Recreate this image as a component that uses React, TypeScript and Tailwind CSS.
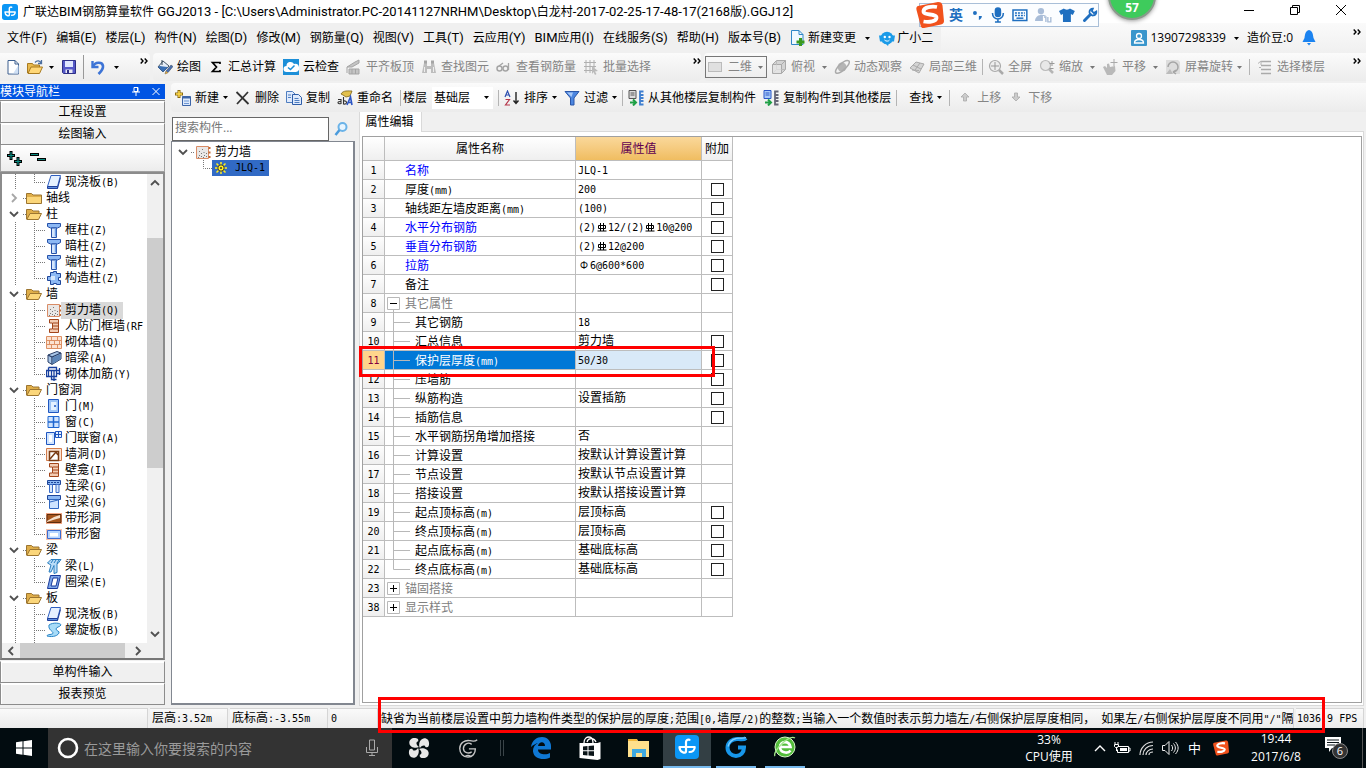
import React, { Fragment, type ReactNode } from "react";

/* ---------- text helpers ---------- */

const RebarIII = () => (
  <svg role="img" aria-label="HRB400" viewBox="0 0 12 10" className="inline-block h-[10px] w-3 align-[-1px]">
    <path d="M2.5 3.5h7v3h-7zM4.5 1v8M7.5 1v8M1.5 9h9" fill="none" stroke="#000" strokeWidth="1" />
  </svg>
);

/* Half-width Latin runs beside full-width Han characters. "#" stands for the grade III bar symbol. */
function Grid({ t }: { t: string }) {
  const parts = t.match(/#|Φ|[\x20-\x7e]+?(?=#|Φ|[^\x20-\x7e]|$)|[^\x20-\x7eΦ]+/g) ?? [];
  return (
    <>
      {parts.map((p, i) => {
        if (p === "#") return <RebarIII key={i} />;
        if (p === "Φ")
          return (
            <span key={i} className="inline-block w-3 text-center text-[10px]">
              Φ
            </span>
          );
        if (/^[\x20-\x7e]/.test(p))
          return (
            <span key={i} className="font-['DejaVu_Sans_Mono',monospace] text-[10px]">
              {p}
            </span>
          );
        return <Fragment key={i}>{p}</Fragment>;
      })}
    </>
  );
}

/* Window captions and menus: Latin runs one pixel larger than the Han text. */
function Caption({ t }: { t: string }) {
  const parts = t.match(/[\x20-\x7e]+|[^\x20-\x7e]+/g) ?? [];
  return (
    <>
      {parts.map((p, i) =>
        /^[\x20-\x7e]/.test(p) ? (
          <span key={i} className="font-[Roboto,sans-serif] text-[13px]">{p}</span>
        ) : (
          <Fragment key={i}>{p}</Fragment>
        ),
      )}
    </>
  );
}

/* ---------- small glyphs ---------- */

const Arrow = ({ dim }: { dim?: boolean }) => (
  <svg viewBox="0 0 5 3" className={dim ? "h-[3px] w-[5px] shrink-0 text-[#777]" : "h-[3px] w-[5px] shrink-0 text-black"}>
    <path d="M0 0h5L2.5 3z" fill="currentColor" />
  </svg>
);
const Sep = ({ tight }: { tight?: boolean }) => <span className={tight ? "-mx-[2px] h-4 w-px shrink-0 bg-[#b4b4b4]" : "h-4 w-px shrink-0 bg-[#b4b4b4]"} />;
const More = () => (
  <button aria-label="更多" className="mb-3 shrink-0">
    <svg viewBox="0 0 8 6" className="h-[6px] w-2">
      <path d="M.7.5 3 3 .7 5.5M4.7.5 7 3 4.7 5.5" fill="none" stroke="#000" strokeWidth="1.4" />
    </svg>
  </button>
);
const Ico = ({ children }: { children: ReactNode }) => (
  <svg viewBox="0 0 16 16" className="h-4 w-4 shrink-0" fill="none">
    {children}
  </svg>
);

const AppLogo = ({ big }: { big?: boolean }) => (
  <svg viewBox="0 0 24 24" className={big ? "h-6 w-6" : "h-4 w-4"} fill="none">
    <rect width="24" height="24" rx="4" fill="#0b96f5" />
    <path d="M14.500 4.800c-2.200-.6-3.500.5-3.500 2.500v9.200c0 2.500-6.500 1-6.500-4.500h15.200c0 3-2.200 5-5.200 5" stroke="#fff" strokeWidth="2.200" strokeLinecap="round" strokeLinejoin="round" />
  </svg>
);

const icons: Record<string, ReactNode> = {
  newDoc: (
    <Ico>
      <path d="M3 1.500h7l3.500 3.500v10H3z" fill="#fff" stroke="#3c5f8f" />
      <path d="M3.500 14.500h10V6l-5 8z" fill="#cfe0f5" />
      <path d="M10 1.500V5h3.500" stroke="#3c5f8f" />
    </Ico>
  ),
  open: (
    <Ico>
      <path d="M.5 14V4.500h5l1 1.500h6v2" fill="#e8b94d" stroke="#a87a20" />
      <path d="M1 14.500 4 8h11.500l-3 6.500z" fill="#ffd777" stroke="#a87a20" />
      <path d="M8 3.500c2-2.500 5-2 6 .5m.5-3v3.500H11" stroke="#4c6f9f" strokeWidth="1.300" />
    </Ico>
  ),
  save: (
    <Ico>
      <path d="M1.500 1.500h13v13h-12l-1-1z" fill="#5458c8" stroke="#2d2f86" />
      <path d="M4 2h8v6H4z" fill="#dfe6ff" />
      <path d="M4.500 10.500h7V14h-7z" fill="#e8e8f4" />
      <path d="M6 11h2v3H6z" fill="#2d2f86" />
    </Ico>
  ),
  undo: (
    <Ico>
      <path d="M2.500 2v6h6" stroke="#3d74d6" strokeWidth="2.400" />
      <path d="M3 7.500C5 2.500 12.500 2.500 13 7c.3 3.500-2 5.500-4.500 8" stroke="#3d74d6" strokeWidth="2.600" />
    </Ico>
  ),
  draw: (
    <Ico>
      <path d="m6 2 6 5-6 6-5-5z" fill="#e6eef8" stroke="#456" />
      <path d="M5 1v5" stroke="#345" />
      <path d="M1 8c2-2 4 0 10 0l-5 5z" fill="#3a6fb5" />
      <path d="m8 15 1-3 5-6 2 1.500-5 6z" fill="#4b6fb0" stroke="#345" strokeWidth=".5" />
      <path d="m8 15 1-3 2 2z" fill="#e3a93a" />
    </Ico>
  ),
  sigma: (
    <Ico>
      <path d="M12 5V3.500H4.500L8.500 8l-4 4.500H12V11" stroke="#000" strokeWidth="1.700" />
    </Ico>
  ),
  cloud: (
    <Ico>
      <rect width="16" height="16" fill="#1c8fd8" />
      <path d="M3.500 13a2.500 2.500 0 0 1 0-6 4 4 0 0 1 7.500-2 4 4 0 0 1 2 8z" fill="#fff" />
      <path d="m5 8.500 2.500 2 4-4" stroke="#1c8fd8" strokeWidth="1.500" />
    </Ico>
  ),
  align: (
    <Ico>
      <path d="m1 8 8-5 4-2v3L6 8zM3 10h10v5H3z" fill="#c4c4c4" stroke="#a5a5a5" />
      <path d="M1 8v6M6 10v5M9.500 10v5" stroke="#a5a5a5" />
    </Ico>
  ),
  find: (
    <Ico>
      <path d="M3 4h3v3h4V4h3l2 10h-5v-4H6v4H1z" fill="#bdbdbd" />
      <path d="M3 1.500h3v3H3zM10 1.500h3v3h-3z" fill="#a5a5a5" />
      <path d="M3.500 8v5M12.500 8v5" stroke="#eee" />
    </Ico>
  ),
  glasses: (
    <Ico>
      <circle cx="3.500" cy="9.500" r="2.500" stroke="#a5a5a5" strokeWidth="1.500" />
      <circle cx="9.500" cy="9.500" r="2.500" stroke="#a5a5a5" strokeWidth="1.500" />
      <path d="m3 7 4-3M12.500 11V4" stroke="#a5a5a5" strokeWidth="1.300" />
    </Ico>
  ),
  batch: (
    <Ico>
      <path d="M3 1v13M7 1v13M11 1v8M1 3.500h12M1 7.500h12M1 11.500h8" stroke="#b0b0b0" />
      <path d="m9 7 6 5-3 .5L13.500 15 12 16l-1.500-3L9 15z" fill="#bbb" />
    </Ico>
  ),
  cube: (
    <Ico>
      <path d="m1.500 5.500 4-4h9v9l-4 4h-9z" fill="#d4d4d4" stroke="#aaa" />
      <path d="M1.500 5.500h9v9M10.500 5.500l4-4" stroke="#aaa" />
      <path d="M5.500 1.500v9h9M5.500 10.500l-4 4" stroke="#bbb" />
      <path d="M2 6h8v8H2z" fill="#ececec" fillOpacity=".6" />
    </Ico>
  ),
  orbit: (
    <Ico>
      <circle cx="8" cy="8" r="4.500" fill="#b5b5b5" />
      <path d="M2 14C-1 11 11-1 15 2c2 3-9 14-13 12z" stroke="#aaa" strokeWidth="1.500" />
    </Ico>
  ),
  local3d: (
    <Ico>
      <path d="m1 9 6-6 8 2-5 9z" fill="#d4d4d4" stroke="#aaa" />
      <path d="m4 6 8 4M6 11l5-7M3 11l7 .5" stroke="#aaa" />
    </Ico>
  ),
  full: (
    <Ico>
      <circle cx="7" cy="7" r="5.500" fill="#eee" stroke="#aaa" strokeWidth="1.200" />
      <path d="M7 3v8M3 7h8" stroke="#999" />
      <path d="m11 11 4 4" stroke="#aaa" strokeWidth="2.500" />
    </Ico>
  ),
  zoom: (
    <Ico>
      <circle cx="6.500" cy="6.500" r="5" fill="#e8e8e8" stroke="#bbb" strokeWidth="1.200" />
      <path d="m10 10 4 4" stroke="#b5b5b5" strokeWidth="2.500" />
      <path d="M13 2v5M10.500 4.500h5M10.500 9.500h4" stroke="#999" />
    </Ico>
  ),
  pan: (
    <Ico>
      <path d="M1 8 3 7l2 2V5l2-.5L8 8l5-1 .5 5-3.500 4H5z" fill="#b9b9b9" />
      <path d="M12 0v7M8.500 3.500h7" stroke="#aaa" />
    </Ico>
  ),
  rotate: (
    <Ico>
      <path d="M1 1h12l2 2v12H1z" fill="#ddd" />
      <path d="M3 8a5 5 0 1 1 5 5M8 13l3-2m-3 2 3 2" stroke="#a5a5a5" strokeWidth="1.500" />
      <path d="m1 15 4-5 3 5z" fill="#bbb" />
    </Ico>
  ),
  floor: (
    <Ico>
      <path d="M4 2.500h10M4 6.500h10M4 10.500h10M4 14.500h10" stroke="#aaa" strokeWidth="1.500" />
      <path d="M1 4.500 4 2v4M2 8.500h2" stroke="#b5b5b5" />
    </Ico>
  ),
  create: (
    <Ico>
      <path d="M4 0v8M0 4h8" stroke="#8a6a10" strokeWidth="3" />
      <path d="M4 1v6M1 4h6" stroke="#ffd94a" strokeWidth="1.500" />
      <path d="M7.500 6.500h8v9h-8z" fill="#dce9fb" stroke="#3c64a8" />
      <path d="M7.500 7.500h8" stroke="#3c64a8" strokeWidth="2" />
      <path d="M9 11h5M9 13.500h5" stroke="#6f97d4" />
    </Ico>
  ),
  del: (
    <Ico>
      <path d="m1.500 2 12 12M13 2 2 14" stroke="#333" strokeWidth="1.800" />
    </Ico>
  ),
  copy: (
    <Ico>
      <path d="M.5 1.500h6l3 3v8h-9z" fill="#dfeafc" stroke="#4f7ec0" />
      <path d="M6.500 4.500h6l3 3v7h-9z" fill="#dfeafc" stroke="#2e5da8" />
      <path d="M2 5h3M2 7.500h3M8.500 8.500h4M8.500 10.500h5M8.500 12.500h5" stroke="#4f7ec0" />
    </Ico>
  ),
  rename: (
    <Ico>
      <path d="M4 4c2-4 8-3 11-3l-2 5-4 1-3-2z" fill="#e2c04d" stroke="#7b6216" strokeWidth=".8" />
      <path d="M1 9.500h3V14M4 11.500c-4-.5-4 3 0 2M6.500 7v7c4 1 4-4 0-3" stroke="#333" strokeWidth="1.100" />
      <path d="m10 15 3.500-8L15 15M11 12.500h4" stroke="#2c55c4" strokeWidth="1.600" />
    </Ico>
  ),
  sort: (
    <Ico>
      <path d="M1 7 3.500 1 6 7M2 5h3" stroke="#2c4fb0" strokeWidth="1.200" />
      <path d="M1.500 9.500h4L1.500 15h4.500" stroke="#b5364a" strokeWidth="1.200" />
      <path d="M12 2v11M9.500 10.500 12 13.500l2.500-3" stroke="#222" strokeWidth="1.400" />
    </Ico>
  ),
  filter: (
    <Ico>
      <path d="M1 1.500h14L10 8v7H6.500V8z" fill="#4c86e0" stroke="#2a56a8" />
      <path d="M3 2.500h6L7.500 7z" fill="#a9caf8" />
    </Ico>
  ),
  fromFloor: (
    <Ico>
      <path d="M1 .5h7v8H1z" fill="#ddd" stroke="#555" />
      <path d="M2.500 3h4M2.500 5h4" stroke="#555" />
      <path d="M15.500 1.500H12v13h3.500M12 5h3.500M12 8h3.500M12 11h3.500" stroke="#3f7fd0" strokeWidth="1.800" />
      <path d="M2 12.500h5m-2-3 3 3-3 3" stroke="#1fa046" strokeWidth="2" />
    </Ico>
  ),
  toFloor: (
    <Ico>
      <path d="M1 .5h7v8H1z" fill="#a9caf8" stroke="#2a56c8" />
      <path d="M2.500 3h4M2.500 5h4" stroke="#2a56c8" />
      <path d="M15.500 1.500H12v13h3.500M12 5h3.500M12 8h3.500M12 11h3.500" stroke="#667" strokeWidth="1.800" />
      <path d="M2 12.500h5m-2-3 3 3-3 3" stroke="#1fa046" strokeWidth="2" />
    </Ico>
  ),
  up: (
    <Ico>
      <path d="m8 3 4 4H9.500v4h-3V7H4z" fill="#ccc" stroke="#aaa" strokeWidth=".8" />
    </Ico>
  ),
  down: (
    <Ico>
      <path d="m8 11 4-4H9.500V3h-3v4H4z" fill="#ccc" stroke="#aaa" strokeWidth=".8" />
    </Ico>
  ),
  change: (
    <Ico>
      <path d="M1.500.5h7.500l4 4v10h-11.500z" fill="#f0f8ff" stroke="#2f86c8" />
      <path d="M9 .5v4h4" stroke="#2f86c8" />
      <path d="M10.500 8v8M6.500 12h8" stroke="#3a9a1e" strokeWidth="3" />
    </Ico>
  ),
  chat: (
    <Ico>
      <circle cx="8" cy="8" r="6.300" fill="#1b9be8" />
      <path d="M0 5.500h3v6H1zM13 5.500h3l-1 6h-2zM6 13l3 3 1-3z" fill="#1b9be8" />
      <circle cx="5.800" cy="7" r="1.200" fill="#fff" />
      <circle cx="10.500" cy="7" r="1.200" fill="#fff" />
      <path d="M5.500 10c1.500 1.500 4 1.500 5 0" stroke="#fff" />
    </Ico>
  ),
  user: (
    <Ico>
      <rect width="16" height="16" rx="1" fill="#3a96cc" />
      <circle cx="8" cy="6" r="2.500" stroke="#fff" strokeWidth="1.300" />
      <path d="M3.500 13c0-3 2-3.500 4.500-3.500s4.500.5 4.500 3.500z" stroke="#fff" strokeWidth="1.300" />
    </Ico>
  ),
  bell: (
    <Ico>
      <path d="M8 0c4 1 4 5 4.500 8l2 4h-13l2-4C4 5 4 1 8 0zM6 13h4l-2 2.500z" fill="#1b83f0" />
    </Ico>
  ),
  search: (
    <Ico>
      <circle cx="9.500" cy="6" r="4" stroke="#6bb3e8" strokeWidth="2" fill="#e8f5ff" />
      <path d="m6.500 9-4 5" stroke="#4a9bdc" strokeWidth="2.500" />
    </Ico>
  ),
  /* tree */
  folder: (
    <Ico>
      <path d="M.5 3.500h5L7 5h8.500v8.500H.5z" fill="#dfae4a" stroke="#9c7530" />
      <path d="M1 7h14v6H1z" fill="#fbd67a" />
    </Ico>
  ),
  folderOpen: (
    <Ico>
      <path d="M.5 13V3.500h5L7 5h6v3" fill="#dfae4a" stroke="#9c7530" />
      <path d="m.8 13.500 3.200-6h11.500l-3 6z" fill="#fbd67a" stroke="#9c7530" />
    </Ico>
  ),
  slab: (
    <Ico>
      <path d="M5 1.500h9.500l-3 11H1.500z" fill="#e6f1ff" stroke="#2f5fc0" />
      <path d="M1.500 12.500h10v2h-10zM11.500 14.500l3-11" stroke="#1f3f9a" fill="#5d8fe0" />
    </Ico>
  ),
  column: (
    <Ico>
      <path d="M1.500 1.500h13v3l-3 1.500h-7l-3-1.500z" fill="#8cb8f4" stroke="#2450a8" />
      <path d="M5.500 6h5v9.500h-5z" fill="#d5e6fc" stroke="#2450a8" />
      <path d="M9.500 6.500v8" stroke="#6a9ce6" strokeWidth="1.500" />
    </Ico>
  ),
  tie: (
    <Ico>
      <path d="M4.500 2.500h3v-1h3v2h4v4h-2v3h2v4h-4v-1h-3v1h-3v-4h-3v-4h3z" fill="#8cb8f4" stroke="#1f469a" />
      <path d="M5 6h4v4H5z" fill="#d5e6fc" />
    </Ico>
  ),
  wall: (
    <Ico>
      <path d="M1.500 2.500h12v12h-12z" fill="#eae7e5" stroke="#d98c66" />
      <path d="M4 11.500h1M6 12.500h1M8.500 8.500h1M4 7.500h1M7 5.500h1M9 11.500h1M6 9.500h1M11 12.500h1M8 13.500h1M3 13.500h1M11 9.500h1" stroke="#777" />
      <path d="M14.500 3v2M14.500 7.500v2M14.500 12v2" stroke="#c46830" strokeWidth="2" />
    </Ico>
  ),
  door0: (
    <Ico>
      <path d="M3.500 1.500h9v13h-9v-3.500h3v-6h-3z" fill="#f3cdb4" stroke="#a2451a" />
      <path d="M7 5h5M7 8h5M7 11h5" stroke="#a2451a" />
    </Ico>
  ),
  brick: (
    <Ico>
      <path d="M.5 2.500h15v12H.500z" fill="#fbe3d2" stroke="#dd9064" />
      <path d="M0 6.500h16M0 10.500h16M5.500 2v4.500M11.500 2v4.500M8.500 6.500v4M3.500 6.500v4M13.500 6.500v4M5.500 10.500v4M11.500 10.500v4" stroke="#dd9064" />
    </Ico>
  ),
  darkBeam: (
    <Ico>
      <path d="m2 5 9-3.500 4 1.500v6L6 14.500 2 12z" fill="#a9c6e8" stroke="#2a3f66" />
      <path d="m2 5 4 2 9-4M6 7v7" stroke="#2a3f66" strokeWidth="1.300" />
      <path d="m6.500 7.500 8-3.500v5l-8 5z" fill="#5d86b8" />
    </Ico>
  ),
  mesh: (
    <Ico>
      <path d="M2.500 1.500h8v9h-10v-6h13M2.500 1.500v9M8 4v11M5.500 4.500v9h5M10.500 7.500h4M13.500 2v7" stroke="#173f9e" strokeWidth="1.300" />
    </Ico>
  ),
  door: (
    <Ico>
      <path d="M2.500 1.500h10v13h-10z" fill="#9cc3f6" stroke="#1f56c0" />
      <path d="M5 4h5.500v8H5z" fill="#e3f0ff" />
      <path d="M9 7v2" stroke="#1f56c0" strokeWidth="1.500" />
    </Ico>
  ),
  window: (
    <Ico>
      <path d="M2 2.500h11v11H2z" fill="#cfe4ff" stroke="#1f66d0" />
      <path d="M7.500 2.500v11M2 8h11" stroke="#1f66d0" strokeWidth="1.500" />
    </Ico>
  ),
  doorWin: (
    <Ico>
      <path d="M.5 2.500h8v12h-8z" fill="#cfe4ff" stroke="#1f56c0" />
      <path d="M9.500 1.500h6v6h-6zM12.500 1.500v6M9.500 4.500h6" fill="#e3f0ff" stroke="#1f56c0" />
      <path d="M3 5h3v7H3z" fill="#fff" />
    </Ico>
  ),
  hole: (
    <Ico>
      <path d="M.5 2.500h15v12H.500z" fill="#fbe3d2" stroke="#d27c4c" />
      <path d="M3.500 5.500h9v9h-9z" fill="#fff" stroke="#7a3c14" strokeWidth="1.500" />
      <path d="m4 13 6-7M10 6l2 3" stroke="#7a3c14" strokeWidth="1.500" />
    </Ico>
  ),
  lintel: (
    <Ico>
      <path d="M1.500 2.500h13v4h-13z" fill="#8cb8f4" stroke="#1f469a" />
      <path d="M3.500 6.500h3v8h-3zM10 6.500h3v8h-3z" fill="#d5e6fc" stroke="#3a6cc8" />
      <path d="M2 4.500h12" stroke="#1f469a" strokeDasharray="2 1" />
    </Ico>
  ),
  lintel2: (
    <Ico>
      <path d="M1.500 1.500h13v4h-13z" fill="#8cb8f4" stroke="#1f469a" />
      <path d="M3.500 5.500h9v9h-9z" fill="#cfe4ff" stroke="#2f66c0" />
      <path d="m4 8 8-2" stroke="#2f66c0" />
    </Ico>
  ),
  stripHole: (
    <Ico>
      <path d="M0 3h16v11H0z" fill="#f3a784" />
      <path d="M1 4.500h14v8H1z" fill="#a4541c" stroke="#5e2d0c" />
      <path d="m1 11 7-4 6-2v3l-7 2-6 2z" fill="#f5e0cc" />
    </Ico>
  ),
  stripWin: (
    <Ico>
      <path d="M0 3h16v11H0z" fill="#f7c4ae" />
      <path d="M1.500 4.500h13v8h-13z" fill="#b5d4ff" stroke="#3c6cd0" />
      <path d="M4 7h8v3.500H4z" fill="#fff" />
    </Ico>
  ),
  beam: (
    <Ico>
      <path d="M1.500 5 5 1.500h10l-3 4h-1v9l-3 1v-8L5 14H3l2-7z" fill="#b9dcf8" stroke="#2a7fc0" />
      <path d="m5 5 2-3M8 5l2-3M11 5l2-3" stroke="#2a7fc0" />
    </Ico>
  ),
  ring: (
    <Ico>
      <path d="M4.500 1.500h10l-3 13H1.500z" fill="#7fa8ea" stroke="#16379a" />
      <path d="M7 4h5l-2 8H5z" fill="#fff" stroke="#16379a" />
    </Ico>
  ),
  spiral: (
    <Ico>
      <path d="M3 3c4-3 12-2 12 0-1 2-5 2-5 4s4 2 3 4c-2 4-9 4-12 3 0-2 6-1 6-3s-5-3-4-8z" fill="#a8dcf8" stroke="#2a86c8" />
    </Ico>
  ),
};

/* ---------- bars ---------- */

function Tool({ icon, label, dim, arrow }: { icon?: string; label: string; dim?: boolean; arrow?: boolean }) {
  return (
    <button disabled={dim} className={dim ? "flex shrink-0 items-center gap-1 whitespace-nowrap text-[#858585]" : "flex shrink-0 items-center gap-1 whitespace-nowrap text-black"}>
      {icon && icons[icon]}
      <span>{label}</span>
      {arrow && <Arrow dim={dim} />}
    </button>
  );
}

const menus = ["文件(F)", "编辑(E)", "楼层(L)", "构件(N)", "绘图(D)", "修改(M)", "钢筋量(Q)", "视图(V)", "工具(T)", "云应用(Y)", "BIM应用(I)", "在线服务(S)", "帮助(H)", "版本号(B)"];

function TitleBar() {
  return (
    <header className="flex h-[23px] shrink-0 items-center bg-white pl-[2px]">
      <AppLogo />
      <h1 className="ml-[5px] flex-1 whitespace-nowrap text-[12px]">
        <Caption t="广联达BIM钢筋算量软件 GGJ2013 - [C:\Users\Administrator.PC-20141127NRHM\Desktop\白龙村-2017-02-25-17-48-17(2168版).GGJ12]" />
      </h1>
      <div className="flex gap-9 pr-5 pb-1">
        <button aria-label="最小化">
          <svg viewBox="0 0 10 10" className="h-[10px] w-[10px]"><path d="M0 5.500h10" stroke="#000" /></svg>
        </button>
        <button aria-label="还原">
          <svg viewBox="0 0 10 10" className="h-[10px] w-[10px]"><path d="M.5 2.500h7v7h-7zM2.500 2.500v-2h7v7h-2" fill="none" stroke="#000" /></svg>
        </button>
        <button aria-label="关闭">
          <svg viewBox="0 0 10 10" className="h-[10px] w-[10px]"><path d="m0 0 10 10M10 0 0 10" stroke="#000" /></svg>
        </button>
      </div>
    </header>
  );
}

function MenuBar() {
  return (
    <nav className="flex h-[30px] shrink-0 items-center justify-between bg-gradient-to-b from-[#fafafa] to-[#f0f0f0]">
      <div className="flex h-full items-center gap-[9px] bg-[#f0f0f0] pr-2 pl-[7px]">
        {menus.map((m) => (
          <button key={m} className="whitespace-nowrap"><Caption t={m} /></button>
        ))}
        <button className="flex items-center gap-[2px] whitespace-nowrap">{icons.change}新建变更</button>
        <Arrow />
        <button className="flex items-center gap-[2px] whitespace-nowrap">{icons.chat}广小二</button>
      </div>
      <div className="flex h-full items-center gap-2 pr-[5px]">
        <button className="flex items-center gap-1">{icons.user}13907298339</button>
        <Arrow />
        <span>造价豆:0</span>
        <button aria-label="通知" className="mr-7">{icons.bell}</button>
        <More />
      </div>
    </nav>
  );
}

const bar = "flex items-center gap-[7px] bg-gradient-to-b from-[#fbfbfb] to-[#ececec]";

function ToolBar() {
  return (
    <div className="flex h-[30px] shrink-0 gap-[3px] pb-[2px]">
      <div className="flex w-[150px] items-center justify-between rounded-r bg-gradient-to-b from-[#fbfbfb] to-[#ececec] pr-[2px] pl-[5px]">
        <button aria-label="新建">{icons.newDoc}</button>
        <button aria-label="打开" className="flex items-center gap-[6px]">{icons.open}<Arrow /></button>
        <button aria-label="保存">{icons.save}</button>
        <span className="h-6 w-px bg-[#999]" />
        <button aria-label="撤销" className="flex items-center gap-[8px]">{icons.undo}<Arrow /></button>
        <span className="w-2" />
        <More />
      </div>
      <div className={bar + " w-[548px] rounded pl-1"}>
        <Tool icon="draw" label="绘图" />
        <Tool icon="sigma" label="汇总计算" />
        <Tool icon="cloud" label="云检查" />
        <Tool icon="align" label="平齐板顶" dim />
        <Tool icon="find" label="查找图元" dim />
        <Tool icon="glasses" label="查看钢筋量" dim />
        <Tool icon="batch" label="批量选择" dim />
        <span className="flex-1" />
        <More />
      </div>
      <div className={bar + " flex-1 rounded-l pr-[5px] pl-[1px]"}>
        <button className="-mr-[3px] flex h-[22px] w-[62px] shrink-0 items-center justify-between border border-[#777] pr-[3px] pl-[2px] text-[#858585]">
          <span className="h-[10px] w-[14px] border border-[#bbb] bg-[#e0e0e0]" />
          二维
          <Arrow dim />
        </button>
        <Tool icon="cube" label="俯视" dim /><Arrow dim />
        <Tool icon="orbit" label="动态观察" dim />
        <Tool icon="local3d" label="局部三维" dim />
        <Sep tight />
        <Tool icon="full" label="全屏" dim />
        <Tool icon="zoom" label="缩放" dim /><Arrow dim />
        <Tool icon="pan" label="平移" dim /><Arrow dim />
        <Tool icon="rotate" label="屏幕旋转" dim arrow />
        <Sep />
        <Tool icon="floor" label="选择楼层" dim />
        <span className="flex-1" />
        <More />
      </div>
    </div>
  );
}

function ComponentBar() {
  return (
    <div className={bar + " h-[29px] shrink-0 rounded-l pl-1"}>
      <Tool icon="create" label="新建" arrow />
      <Tool icon="del" label="删除" />
      <Tool icon="copy" label="复制" />
      <Tool icon="rename" label="重命名" />
      <div className="flex items-center gap-[2px]"><Sep /><label htmlFor="floor">楼层</label></div>
      <div className="relative -ml-[2px] flex h-[22px] w-[61px] items-center bg-white">
        <select id="floor" className="w-full appearance-none bg-transparent pl-[2px] outline-none">
          <option>基础层</option>
        </select>
        <span className="pointer-events-none absolute right-[4px]"><Arrow /></span>
      </div>
      <Sep tight />
      <Tool icon="sort" label="排序" arrow />
      <Tool icon="filter" label="过滤" arrow />
      <Sep tight />
      <Tool icon="fromFloor" label="从其他楼层复制构件" />
      <Tool icon="toFloor" label="复制构件到其他楼层" />
      <Sep tight />
      <span className="w-0" />
      <Tool label="查找" arrow />
      <Sep />
      <Tool icon="up" label="上移" dim />
      <Tool icon="down" label="下移" dim />
    </div>
  );
}

/* ---------- navigation ---------- */

type Node = { g?: "open" | "closed"; i?: string; t: string; last?: boolean; sel?: boolean };
const tree: Node[] = [
  { i: "slab", t: "现浇板(B)", last: true },
  { g: "closed", t: "轴线" },
  { g: "open", t: "柱" },
  { i: "column", t: "框柱(Z)" },
  { i: "column", t: "暗柱(Z)" },
  { i: "column", t: "端柱(Z)" },
  { i: "tie", t: "构造柱(Z)", last: true },
  { g: "open", t: "墙" },
  { i: "wall", t: "剪力墙(Q)", sel: true },
  { i: "door0", t: "人防门框墙(RF" },
  { i: "brick", t: "砌体墙(Q)" },
  { i: "darkBeam", t: "暗梁(A)" },
  { i: "mesh", t: "砌体加筋(Y)", last: true },
  { g: "open", t: "门窗洞" },
  { i: "door", t: "门(M)" },
  { i: "window", t: "窗(C)" },
  { i: "doorWin", t: "门联窗(A)" },
  { i: "hole", t: "墙洞(D)" },
  { i: "door0", t: "壁龛(I)" },
  { i: "lintel", t: "连梁(G)" },
  { i: "lintel2", t: "过梁(G)" },
  { i: "stripHole", t: "带形洞" },
  { i: "stripWin", t: "带形窗", last: true },
  { g: "open", t: "梁" },
  { i: "beam", t: "梁(L)" },
  { i: "ring", t: "圈梁(E)", last: true },
  { g: "open", t: "板" },
  { i: "slab", t: "现浇板(B)" },
  { i: "spiral", t: "螺旋板(B)" },
];

const Chevron = ({ d }: { d: "down" | "right" | "up" | "left" }) => (
  <svg viewBox="0 0 10 10" className="h-[10px] w-[10px] shrink-0" fill="none" stroke="#505050" strokeWidth="1.800">
    <path d={{ down: "m1 3 4 4 4-4", right: "m3 1 4 4-4 4", up: "m1 7 4-4 4 4", left: "m7 1-4 4 4 4" }[d]} />
  </svg>
);

function TreeRow({ n }: { n: Node }) {
  if (n.g)
    return (
      <li className="flex h-4 items-center pl-[6px]">
        <span className={n.g === "closed" ? "flex opacity-50" : "flex"}><Chevron d={n.g === "open" ? "down" : "right"} /></span>
        <svg viewBox="0 0 7 16" className="h-4 w-[7px]"><path d="M4 8.500h3" stroke="#777" strokeDasharray="1 1" /></svg>
        {icons[n.g === "open" ? "folderOpen" : "folder"]}
        <span className="pl-1"><Grid t={n.t} /></span>
      </li>
    );
  return (
    <li className="flex h-4 items-center pl-3 whitespace-nowrap">
      <svg viewBox="0 0 31 16" className="h-4 w-[31px] shrink-0" stroke="#777" strokeDasharray="1 1">
        <path d={n.last ? "M.5 0v16M19.500 0v8M19 8.500h11" : "M.5 0v16M19.500 0v16M19 8.500h11"} />
      </svg>
      {icons[n.i!]}
      <span className={n.sel ? "-ml-px bg-[#d9d9d9] px-1 leading-4" : "pl-[3px] leading-4"}><Grid t={n.t} /></span>
    </li>
  );
}

const NavButton = ({ children }: { children: string }) => (
  <button className="h-[22px] shrink-0 border border-[#8c8c8c] border-t-[#fff] bg-[#f0f0f0] text-center shadow-[inset_1px_1px_0_#fff]">{children}</button>
);

function Navigator() {
  return (
    <aside className="flex w-[165px] shrink-0 flex-col">
      <div className="mt-[1px] flex h-[15px] shrink-0 items-center justify-between bg-[#0054e3] pr-[5px] text-white">
        <h2 className="leading-[15px]">模块导航栏</h2>
        <div className="flex gap-3">
          <button aria-label="固定"><svg viewBox="0 0 8 9" className="h-[9px] w-2" fill="none" stroke="#fff"><path d="M2 .5h4v4H2zM5.500.5v4M0 5h8M4 5v4" /></svg></button>
          <button aria-label="关闭"><svg viewBox="0 0 8 9" className="h-[9px] w-2" stroke="#fff"><path d="m.5 1 7 7M7.500 1l-7 7" /></svg></button>
        </div>
      </div>
      <div className="mt-[1px] flex shrink-0 flex-col border-t border-[#8c8c8c]">
        <NavButton>工程设置</NavButton>
        <NavButton>绘图输入</NavButton>
      </div>
      <div className="flex h-[27px] shrink-0 items-center border border-t-0 border-[#a0a0a0] bg-gradient-to-b from-white to-[#ececec] pl-[5px]">
        <button aria-label="展开与收起">
          <svg viewBox="0 0 42 16" className="h-4 w-[42px]">
            <path d="M1 5.500h8M5 1v9M8 11.500h8M12 7v9M24 4.500h9M31 9.500h9" stroke="#000" strokeWidth="3" />
            <path d="M2 5.500h6M5 2v7M9 11.500h6M12 8v7M25 4.500h7M32 9.500h7" stroke="#0a8a80" strokeWidth="1.200" />
          </svg>
        </button>
      </div>
      <div className="flex min-h-0 flex-1 flex-col border-2 border-[#8c8c8c] border-b-[#777] bg-white">
        <div className="flex min-h-0 flex-1">
          <ul className="min-w-0 flex-1 overflow-hidden pl-px">
            {tree.map((n, i) => <TreeRow key={i} n={n} />)}
            <li className="flex h-4 pl-3">
              <svg viewBox="0 0 31 16" className="h-4 w-[31px]" stroke="#777" strokeDasharray="1 1"><path d="M.5 0v16M19.500 0v16" /></svg>
            </li>
          </ul>
          <div className="flex w-4 flex-col items-center bg-[#f0f0f0] py-1">
            <Chevron d="up" />
            <span className="grow-[50]" />
            <span className="w-full grow-[228] bg-[#cdcdcd]" />
            <span className="grow-[160]" />
            <Chevron d="down" />
          </div>
        </div>
        <div className="flex h-[15px] shrink-0 items-center bg-[#f0f0f0] pr-[20px] pl-1">
          <Chevron d="left" />
          <span className="ml-1 h-full flex-1 bg-[#cdcdcd]" />
          <span className="w-2" />
          <Chevron d="right" />
        </div>
      </div>
      <div className="mt-[1px] mb-[1px] flex shrink-0 flex-col">
        <NavButton>单构件输入</NavButton>
        <NavButton>报表预览</NavButton>
      </div>
    </aside>
  );
}

function ComponentList() {
  return (
    <section className="flex w-[184px] shrink-0 flex-col pt-[5px] pb-[1px]">
      <div className="flex h-6 shrink-0 items-center pr-1 pl-[1px]">
        <input aria-label="搜索构件" placeholder="搜索构件..." className="h-6 w-[157px] border border-[#666] bg-white px-[2px] pb-[3px] outline-none placeholder:text-[#777]" />
        <button aria-label="搜索" className="ml-1">{icons.search}</button>
      </div>
      <ul className="flex-1 border border-r-2 border-b-2 border-[#828790] bg-white pt-[2px]">
        <li className="flex h-4 items-center pl-[6px]">
          <Chevron d="down" />
          <svg viewBox="0 0 7 16" className="h-4 w-[7px]"><path d="M3 8.500h4" stroke="#777" strokeDasharray="1 1" /></svg>
          {icons.wall}
          <span className="pl-1">剪力墙</span>
        </li>
        <li className="flex h-4 items-center pl-[31px]">
          <svg viewBox="0 0 9 16" className="h-4 w-[9px]" fill="none"><path d="M.5 0v8.500H9" stroke="#777" strokeDasharray="1 1" /></svg>
          <span className="flex h-4 items-center gap-2 bg-[#316ac5] pr-[4px] pl-[3px]">
            <svg viewBox="0 0 12 12" className="h-3 w-3" fill="none">
              <path d="M6 0v12M0 6h12M1.500 1.500l9 9M10.500 1.500l-9 9" stroke="#ffee20" strokeWidth="1.500" />
              <circle cx="6" cy="6" r="3.200" fill="#ffee20" stroke="#333" />
              <circle cx="6" cy="6" r="1" fill="#333" />
            </svg>
            <Grid t="JLQ-1" />
          </span>
        </li>
      </ul>
    </section>
  );
}

/* ---------- property table ---------- */

type Prop = { n: number; name: string; v?: string; box?: boolean; blue?: boolean; child?: "mid" | "end"; group?: "+" | "-" };
const props: Prop[] = [
  { n: 1, name: "名称", v: "JLQ-1", blue: true },
  { n: 2, name: "厚度(mm)", v: "200", box: true },
  { n: 3, name: "轴线距左墙皮距离(mm)", v: "(100)", box: true },
  { n: 4, name: "水平分布钢筋", v: "(2)#12/(2)#10@200", box: true, blue: true },
  { n: 5, name: "垂直分布钢筋", v: "(2)#12@200", box: true, blue: true },
  { n: 6, name: "拉筋", v: "Φ6@600*600", box: true, blue: true },
  { n: 7, name: "备注", box: true },
  { n: 8, name: "其它属性", group: "-" },
  { n: 9, name: "其它钢筋", v: "18", child: "mid" },
  { n: 10, name: "汇总信息", v: "剪力墙", box: true, child: "mid" },
  { n: 11, name: "保护层厚度(mm)", v: "50/30", box: true, child: "mid" },
  { n: 12, name: "压墙筋", box: true, child: "mid" },
  { n: 13, name: "纵筋构造", v: "设置插筋", box: true, child: "mid" },
  { n: 14, name: "插筋信息", box: true, child: "mid" },
  { n: 15, name: "水平钢筋拐角增加搭接", v: "否", child: "mid" },
  { n: 16, name: "计算设置", v: "按默认计算设置计算", child: "mid" },
  { n: 17, name: "节点设置", v: "按默认节点设置计算", child: "mid" },
  { n: 18, name: "搭接设置", v: "按默认搭接设置计算", child: "mid" },
  { n: 19, name: "起点顶标高(m)", v: "层顶标高", box: true, child: "mid" },
  { n: 20, name: "终点顶标高(m)", v: "层顶标高", box: true, child: "mid" },
  { n: 21, name: "起点底标高(m)", v: "基础底标高", box: true, child: "mid" },
  { n: 22, name: "终点底标高(m)", v: "基础底标高", box: true, child: "end" },
  { n: 23, name: "锚固搭接", group: "+" },
  { n: 38, name: "显示样式", group: "+" },
];

const cell = "h-[19px] border-r border-b border-[#bdbdbd] p-0";

function PropRow({ p }: { p: Prop }) {
  const on = p.n === 11;
  return (
    <tr>
      <th scope="row" className={cell + (on ? " bg-[#ffd58c] font-normal text-[#800040]" : " bg-gradient-to-b from-[#fdfdfd] to-[#efefef] font-normal")}>
        <Grid t={String(p.n)} />
      </th>
      <td className={cell + (on ? " bg-[#0078d7] text-white" : p.blue ? " text-[#0000ff]" : p.group ? " text-[#808080]" : "")}>
        <div className="flex h-[18px] items-center">
          <svg viewBox={p.child ? "0 0 30 18" : "0 0 20 18"} className={p.child ? "h-[18px] w-[30px] shrink-0 overflow-visible" : "h-[18px] w-5 shrink-0 overflow-visible"} fill="none" stroke="#b8b8b8">
            {p.child && <path d={p.child === "mid" ? "M8.500 0v19M8.500 9.500H25" : "M8.500 0v9.500H25"} />}
            {p.group && <path d="M2.500 3.500h12v12h-12z" />}
            {p.group === "-" && <path d="M8.500 16v3" />}
            {p.group && <path d={p.group === "+" ? "M5 9.500h7M8.500 6v7" : "M5 9.500h7"} stroke="#000" />}
          </svg>
          <span className="pt-[2px] whitespace-nowrap"><Grid t={p.name} /></span>
        </div>
      </td>
      <td className={cell + (on ? " bg-[#d9e9f8]" : "")}>
        <div className="h-[18px] pl-[2px] leading-[18px] whitespace-nowrap">{p.v && <Grid t={p.v} />}</div>
      </td>
      <td className={cell}>
        {p.box && <input type="checkbox" aria-label={"附加 " + p.name} className="mx-auto block h-[13px] w-[13px] appearance-none border border-[#222] bg-white" />}
      </td>
    </tr>
  );
}

function Properties() {
  return (
    <section className="flex min-w-0 flex-1 flex-col pr-[2px]">
      <div className="flex h-5 shrink-0" role="tablist">
        <button role="tab" aria-selected="true" className="w-[63px] border-r border-l border-[#d9d9d9] bg-white pr-[2px]">属性编辑</button>
        <span className="flex-1 border-b border-[#d9d9d9]" />
      </div>
      <div className="flex flex-1 border-r border-b border-l border-[#d9d9d9] bg-white pt-1 pr-[1px] pb-[2px] pl-[2px]">
        <div className="min-w-0 flex-1 border border-[#a0a0a0] bg-white">
          <div className="relative w-[370px]">
            <table className="w-full table-fixed border-separate border-spacing-0">
              <colgroup>
                <col className="w-[22px]" />
                <col className="w-[191px]" />
                <col className="w-[126px]" />
                <col className="w-[31px]" />
              </colgroup>
              <thead>
                <tr className="h-[24px]">
                  <th className={cell + " bg-gradient-to-b from-white to-[#efefef]"} />
                  <th className={cell + " bg-gradient-to-b from-white to-[#efefef] font-normal"}>属性名称</th>
                  <th className={cell + " bg-gradient-to-b from-[#fad89a] to-[#f0bd60] font-normal text-[#600050]"}>属性值</th>
                  <th className={cell + " bg-gradient-to-b from-white to-[#efefef] font-normal whitespace-nowrap"}>附加</th>
                </tr>
              </thead>
              <tbody>{props.map((p) => <PropRow key={p.n} p={p} />)}</tbody>
            </table>
            <div className="pointer-events-none absolute top-[209px] -left-1 h-[31px] w-[356px] border-[3px] border-[#ff0000]" />
          </div>
        </div>
      </div>
    </section>
  );
}

/* ---------- bottom ---------- */

function StatusBar() {
  const s = "flex shrink-0 items-center border-t border-r border-[#d5d5d5] bg-gradient-to-b from-[#fafafa] to-[#ebebeb] pl-[1px] whitespace-nowrap";
  return (
    <footer className="flex h-[22px] shrink-0 gap-[2px] pt-[2px] pr-[2px]">
      <div className={s + " w-[148px]"} />
      <div className={s + " w-[78px] pl-[2px]"}><span><Grid t="层高:3.52m" /></span></div>
      <div className={s + " w-[98px] pl-[2px]"}><span><Grid t="底标高:-3.55m" /></span></div>
      <div className={s + " w-12"}><Grid t="0" /></div>
      <div className="relative flex min-w-0 flex-1 border-t border-r border-[#d5d5d5] bg-gradient-to-b from-[#fafafa] to-[#ebebeb]">
        <p className="overflow-hidden pl-px leading-[19px] whitespace-nowrap">
          <Grid t={'缺省为当前楼层设置中剪力墙构件类型的保护层的厚度;范围[0,墙厚/2)的整数;当输入一个数值时表示剪力墙左/右侧保护层厚度相同， 如果左/右侧保护层厚度不同用"/"隔'} />
        </p>
        <div className="pointer-events-none absolute -top-3 -right-8 -left-[2px] z-10 h-9 border-[3px] border-[#ff0000]" />
      </div>
      <div className={s + " w-[68px]"}><span><Grid t="1036.9 FPS" /></span></div>
    </footer>
  );
}

const Sogou = ({ className }: { className: string }) => (
  <svg viewBox="0 0 28 28" className={className}>
    <path d="m2 5 20-4c3 0 4 1 4.500 3.500L28 20c0 2-1 3-3 3.500L8 27c-2 .3-3-.5-3.500-3L.5 9c-.5-2 0-3.500 1.500-4z" fill="#f1521d" />
    <path d="M21 6c-5-1-13 0-13.500 4C7 15 21 12 20.500 17c-.5 3.500-7 4.500-13 3.500" fill="none" stroke="#fff" strokeWidth="3.800" />
  </svg>
);

const task = "flex h-full w-[49px] shrink-0 items-center justify-center";

function TaskBar() {
  return (
    <div className="flex h-10 shrink-0 items-stretch bg-[#020c10] text-white">
      <button aria-label="开始" className="flex w-12 shrink-0 items-center justify-center">
        <svg viewBox="0 0 16 16" className="h-4 w-4"><path d="M0 2.200 6.500 1.300v6.200H0zM7.500 1.200 16 0v7.500H7.500zM0 8.500h6.500v6.200L0 13.800zM7.500 8.500H16V16l-8.500-1.200z" fill="#fff" /></svg>
      </button>
      <div className="flex w-[344px] shrink-0 items-center bg-[#333333] pr-[13px] pl-2">
        <svg viewBox="0 0 24 24" className="h-6 w-6"><circle cx="12" cy="12" r="9" fill="none" stroke="#fff" strokeWidth="2.600" /></svg>
        <input aria-label="搜索" placeholder="在这里输入你要搜索的内容" className="ml-1 h-6 min-w-0 flex-1 bg-transparent text-[14px] outline-none placeholder:text-[#9a9a9a]" />
        <svg viewBox="0 0 14 18" className="h-[18px] w-[14px]" fill="none" stroke="#aaa"><path d="M4.500 1h5v10h-5zM1.500 8v5.500h11V8M7 13.500V17M4 16.500h6" /></svg>
      </div>
      <div className="flex pl-[2px]">
        <button aria-label="风扇" className={task}>
          <svg viewBox="0 0 24 24" className="h-[22px] w-[22px]" fill="#e8e8e8">
            <path d="M12 11C8 13 2 11 1.500 7 1 3 4 1 7 1c3 0 5 1 4 4-2 0-3 3 1 6zM13 12c-2-4 0-10 4-10.500 4-.5 6 2.500 6 5.500s-1 5-4 4c0-2-3-3-6 1zM12 13c4-2 10 0 10.500 4 .5 4-2.500 6-5.500 6s-5-1-4-4c2 0 3-3-1-6zM11 12c2 4 0 10-4 10.500C3 23 1 20 1 17s1-5 4-4c0 2 3 3 6-1z" />
          </svg>
        </button>
        <button aria-label="G" className={task}>
          <svg viewBox="0 0 24 24" className="h-[22px] w-[22px]" fill="none" stroke="#c8c8c8" strokeWidth="1.500">
            <path d="M22 3c-2 2-4 2-8 1-6-1-11 3-11 8.500S7 22 12 22s8-4 8-9h-7" /><path d="M16 8c-4-3-9 0-9 4.500s6 6.500 9 3.500M9 21c2-1 4-1 6 0" />
          </svg>
        </button>
        <span className="my-3 mr-1 ml-2 w-1 border-r border-l border-[#3a4448]" />
      </div>
      <button aria-label="Edge" className={task + " ml-2"}>
        <svg viewBox="0 0 24 24" className="h-6 w-6"><path d="M2 11C3 4 8 1 13 1c6 0 9 5 9 9v3.500H9c0 5 8 6 12 3.500v4.500c-6 3-16 2-17-6-.3-4 2-7 5-8.500-2 .5-5 2-7 4zM9 10h7c0-5-6-5-7 0z" fill="#0f78d4" /></svg>
      </button>
      <button aria-label="应用商店" className={task}>
        <svg viewBox="0 0 24 24" className="h-6 w-6"><path d="M1.500 7h18l3-1v17L19.500 24l-18-2z" fill="#fff" /><path d="M6 7c0-5 3-6 5-6s4 2 4 6M9 6c1-4 7-5 9 0" fill="none" stroke="#fff" strokeWidth="1.300" /><path d="m5 10.500 4.500-.4v4.200H5zM10.500 10l5.500-.5v4.800h-5.500zM5 15.200h4.500v4.300L5 19zM10.500 15.200H16V20l-5.500-.5z" fill="#0a1418" /></svg>
      </button>
      <button aria-label="资源管理器" className={task}>
        <svg viewBox="0 0 24 24" className="h-6 w-6"><path d="M1 3h9l1 2h11v16H1z" fill="#ffe08c" /><path d="M1 3h9v2H1z" fill="#f3b93c" /><path d="M5 13h14v8h-4v-4H9v4H5z" fill="#3fa9e0" /></svg>
      </button>
      <button aria-label="广联达" className="flex h-full w-12 shrink-0 items-center justify-center border-b-2 border-[#76b9ed] bg-[#333f44]"><AppLogo big /></button>
      <button aria-label="广联达G" className="ml-[5px] flex h-full w-10 shrink-0 items-center justify-center border-b-2 border-[#76b9ed]">
        <svg viewBox="0 0 24 24" className="h-6 w-6" fill="none"><path d="M22 3c-2 2-4 1.500-8 1C8 3.500 3.500 7.500 3.500 12.500S7.500 21 12 21s8-3.500 8-8.500h-6" stroke="#1797ea" strokeWidth="4" /><path d="M22 2.500c-3 1.500-7 0-10 1-4 1-7 4-8 8" stroke="#7fd0ff" strokeWidth="1.300" /></svg>
      </button>
      <button aria-label="浏览器" className="ml-[9px] flex h-full w-10 shrink-0 items-center justify-center border-b-2 border-[#76b9ed]">
        <svg viewBox="0 0 24 24" className="h-6 w-6" fill="none"><circle cx="12" cy="12" r="10" fill="#54bd3c" stroke="#d7f5c8" /><path d="M17.500 15.500C15 19 7 18 7 12s9-7 10.500 0H7.500" stroke="#fff" strokeWidth="2.600" /><path d="M2 21C-1 17 16-1 22 3" stroke="#a4e88c" strokeWidth="1.300" /></svg>
      </button>
      <div className="ml-auto flex items-center pr-[3px]">
        <div className="mr-5 w-[50px] text-center leading-[17px]">33%<br />CPU使用</div>
        <div className="flex items-center gap-[7px]">
          <svg viewBox="0 0 12 8" className="h-2 w-3" fill="none"><path d="m1 7 5-5 5 5" stroke="#fff" strokeWidth="1.400" /></svg>
          <svg viewBox="0 0 18 14" className="h-[14px] w-[18px]" fill="none" stroke="#fff"><path d="M4.500 5.500h11v6h-11v-3M15.500 7h1.500v3h-1.500M2 1v2M5 1v2M1.500 3.500h4v2l-1 1h-2l-1-1zM3.500 7v3" /><path d="M7 7h7v3H7z" fill="#fff" stroke="none" /></svg>
          <svg viewBox="0 0 16 16" className="h-4 w-4" fill="none" stroke="#ddd" strokeWidth="1.200"><path d="M2 15C2 8 8 2 15 2M5 15c0-5 4-9.500 10-9.500M8 15c0-3 3-6 7-6M11 15c0-2 2-3 4-3" /></svg>
          <svg viewBox="0 0 18 16" className="h-4 w-[18px]" fill="none" stroke="#eee"><path d="M1.500 5.500H4l4-4v13l-4-4H1.500zM10.500 5c1.500 2 1.500 4 0 6M12.500 3.500c2.500 3 2.500 6 0 9M14.500 2c3.500 4 3.500 8 0 12" /></svg>
          <span className="ml-[2px] w-[14px] text-[13px]">中</span>
          <Sogou className="ml-1 h-4 w-4" />
        </div>
        <div className="ml-[17px] w-[60px] text-center leading-[18px]">19:44<br />2017/6/8</div>
        <div className="relative ml-[18px] h-6 w-6">
          <svg viewBox="0 0 18 18" className="h-[18px] w-[18px]"><path d="M1 1h16v11H8l-3 4v-4H1z" fill="#fff" /><path d="M3 4h12M3 6.500h12M3 9h8" stroke="#0a1418" /></svg>
          <span className="absolute top-[7px] left-2 h-4 w-4 rounded-full border border-[#888] bg-[#333] text-center text-[11px] leading-[14px]">6</span>
        </div>
        <span className="ml-[14px] h-10 w-px bg-[#555]" />
      </div>
    </div>
  );
}

/* ---------- floating widgets ---------- */

function InputMethod() {
  return (
    <div className="absolute top-[3px] right-[267px] z-20 flex h-6 w-[180px] items-center gap-[7px] border border-[#a9bfd8] bg-[#fbfdff] pl-[29px] text-[#1f6fc0]">
      <Sogou className="absolute -top-[3px] -left-1 h-7 w-7" />
      <b className="text-[14px] leading-none">英</b>
      <svg viewBox="0 0 14 16" className="h-4 w-[14px]"><circle cx="5" cy="6" r="2" fill="currentColor" /><path d="M9 9h3c0 2-1 3-3 4z" fill="currentColor" /></svg>
      <svg viewBox="0 0 14 16" className="h-4 w-[14px]" fill="none" stroke="currentColor" strokeWidth="1.600"><rect x="4.500" y="1" width="5" height="8.500" rx="2.500" fill="currentColor" /><path d="M1.500 6c0 8 11 8 11 0M7 12v3M4 15h6" /></svg>
      <svg viewBox="0 0 16 16" className="h-4 w-4" fill="none" stroke="currentColor" strokeWidth="1.500"><path d="M1 3h14v10.500H1z" /><path d="M3 6h10M3 8.500h10" strokeDasharray="2 1" /><path d="M4.500 11.200h7" /></svg>
      <svg viewBox="0 0 18 16" className="h-4 w-[18px]" fill="#a9bdd8"><circle cx="6" cy="4" r="3.200" /><path d="M0 14c0-7 10-8 12-4v4z" /><path d="M8 9h9v6H8z" fill="#fff" /><path d="M9 10h2v5M13 10v5h3v-5" fill="none" stroke="#a9bdd8" strokeWidth="1.400" /></svg>
      <svg viewBox="0 0 16 16" className="h-4 w-4" fill="currentColor"><path d="M5 1.500c1 1.500 5 1.500 6 0L16 4l-2 4-2-1v8H4V7L2 8 0 4z" /></svg>
      <svg viewBox="0 0 16 16" className="h-4 w-4" fill="none" stroke="currentColor"><path d="m2.500 13.500 6-6" strokeWidth="3" strokeLinecap="round" /><path d="M14.500 4.500A3.500 3.500 0 1 1 11 1.500L10 4l2 2z" strokeWidth="1.800" /></svg>
    </div>
  );
}

const SpeedBall = () => (
  <div className="absolute -top-7 right-[210px] z-20 flex h-[48px] w-[48px] items-end justify-center rounded-full border-2 border-[#8a9a8c] bg-[#3ecb5c] pb-1 text-[12px] leading-[13px] font-bold text-white shadow-[0_1px_4px_#999]">57</div>
);

export default function App() {
  return (
    <div className="relative flex h-screen flex-col overflow-hidden bg-[#f0f0f0] font-['Open_Sans','Noto_Sans_CJK_SC',sans-serif] text-[12px] leading-4 text-black">
      <TitleBar />
      <MenuBar />
      <ToolBar />
      <main className="flex min-h-0 flex-1">
        <Navigator />
        <div className="ml-[6px] flex min-w-0 flex-1 flex-col">
          <ComponentBar />
          <div className="flex min-h-0 flex-1">
            <ComponentList />
            <span className="w-[4px] shrink-0" />
            <Properties />
          </div>
        </div>
      </main>
      <StatusBar />
      <TaskBar />
      <InputMethod />
      <SpeedBall />
    </div>
  );
}
